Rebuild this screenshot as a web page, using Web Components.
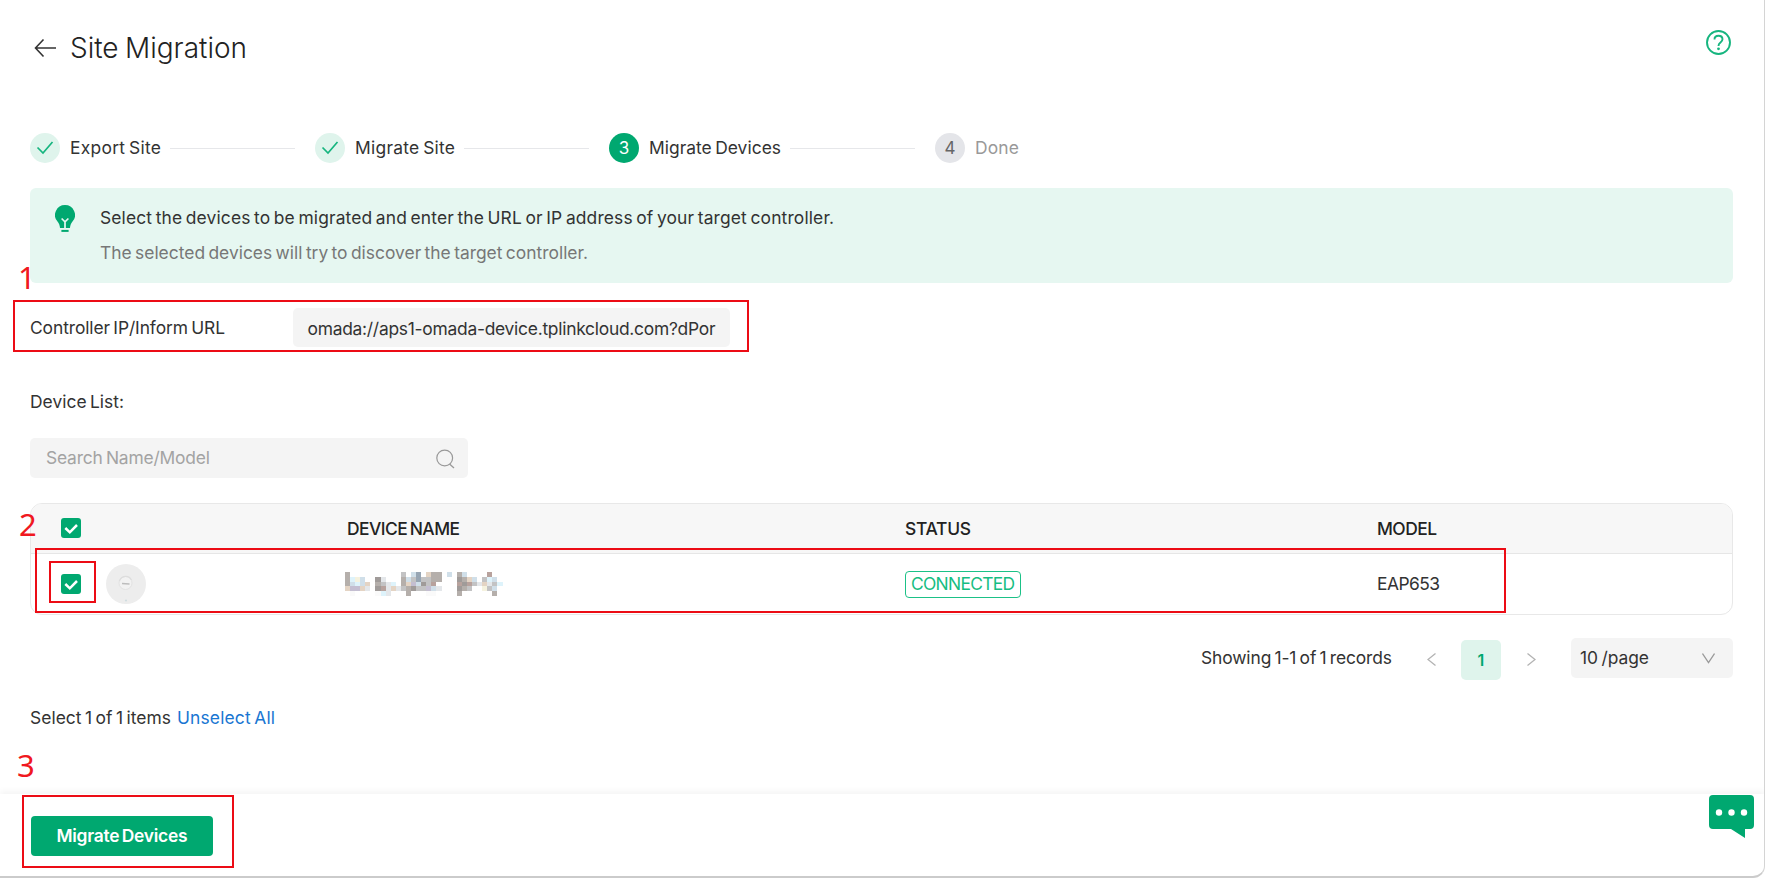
<!DOCTYPE html>
<html lang="en">
<head>
<meta charset="utf-8">
<title>Site Migration</title>
<style>
html,body{margin:0;padding:0;background:#fff}
body{width:1765px;height:878px;overflow:hidden;font-family:Inter,"Open Sans",sans-serif;font-size:17.4px;word-spacing:-1.5px;color:#333}
</style>
</head>
<body>
<site-migration></site-migration>
<script>
const define = (name, html, init) => customElements.define(name, class extends HTMLElement {
  constructor() {
    super();
    const t = document.createElement('template');
    t.innerHTML = html;
    this.attachShadow({ mode: 'open' }).appendChild(t.content.cloneNode(true));
  }
  connectedCallback() { if (init) init(this, this.shadowRoot); }
});

/* Single line of text, tracked so that it spans the width in its "w" attribute. */
define('fit-text', `<style>
:host{display:inline-block;white-space:pre;line-height:24px;flex:none}
</style><span><slot></slot></span>`, (el, root) => {
  const span = root.querySelector('span');
  const w = +el.getAttribute('w');
  const n = el.textContent.length;
  span.style.letterSpacing = '0px';
  const natural = span.getBoundingClientRect().width;
  if (n > 1) span.style.letterSpacing = ((w - natural) / (n - 1)).toFixed(4) + 'px';
  el.style.width = w + 'px';
});

define('step-item', `<style>
:host{display:flex;align-items:center;height:31px;color:#333}
.dot{width:30px;height:30px;border-radius:50%;background:#dff4ec;display:flex;align-items:center;justify-content:center;margin-right:10px;flex:none;font-size:17px}
svg{display:none}
:host([state=done]) svg{display:block}
:host([state=done]) .num{display:none}
:host([state=current]) .dot{background:#00a870;color:#fff}
:host([state=next]) .dot{background:#e4e5e9;color:#666}
:host([state=next]){color:#999}
.num{margin-top:1px}
.line{width:125px;height:1px;background:#e6e7ea;margin:1px 20px 0 9px}
:host([state=next]) .line{display:none}
</style>
<div class="dot"><span class="num"></span><svg width="18" height="16" viewBox="0 0 18 16"><path d="M1.5 7.5 7 13 16.5 2" fill="none" stroke="#16b57f" stroke-width="1.7"/></svg></div>
<slot></slot><div class="line"></div>`, (el, root) => {
  const n = el.getAttribute('n');
  if (n) root.querySelector('.num').textContent = n;
});

define('info-banner', `<style>
:host{display:flex;height:95px;background:#e6f7f1;border-radius:6px;margin-top:25px;box-sizing:border-box;padding:17px 25px}
.copy{display:flex;flex-direction:column;gap:11px;margin:1px 0 0 25px}
.sub{color:#777}
</style>
<svg width="20" height="27" viewBox="0 0 20 27"><path d="M10 0a10 10 0 0 1 7.5 16.6c-1.6 2-2.3 3.9-2.5 6.4H5c-.2-2.500-.9-4.400-2.500-6.400A10 10 0 0 1 10 0z" fill="#00a870"/><path d="M6.600 13.500 10 16.800 13.400 13.500M10 16.500V23.500" fill="none" stroke="#e6f7f1" stroke-width="1.700"/><path d="M6.400 24.900h7.200v2H6.400z" fill="#00a870"/></svg>
<div class="copy"><fit-text w="734">Select the devices to be migrated and enter the URL or IP address of your target controller.</fit-text>
<fit-text class="sub" w="488">The selected devices will try to discover the target controller.</fit-text></div>`);

define('url-field', `<style>
:host{display:flex;align-items:center;margin-top:25px;height:39px}
.label{width:262.500px}
.box{width:437.500px;height:39px;background:#f4f4f4;border-radius:5px;display:flex;align-items:center;padding:2px 0 0 15px;box-sizing:border-box}
</style><div class="label"><slot name="label"></slot></div><div class="box"><slot></slot></div>`);

define('search-box', `<style>
:host{display:flex;align-items:center;justify-content:space-between;width:438px;height:40px;box-sizing:border-box;background:#f4f4f4;border-radius:5px;margin-top:24px;padding:0 13px 0 16px;color:#a3a3a3}
svg{margin-top:2px}
</style><slot></slot><svg width="19" height="20" viewBox="0 0 19 20"><circle cx="8.700" cy="9" r="7.900" fill="none" stroke="#999" stroke-width="1.200"/><path d="M13.500 15 18 19" stroke="#999" stroke-width="1.300"/></svg>`);

define('check-box', `<style>
:host{display:block;width:20px;height:20px;flex:none}svg{display:block}
</style><svg width="20" height="20" viewBox="0 0 20 20"><rect width="20" height="20" rx="3" fill="#00a870"/><path d="M4.300 10 8.800 14.300 16 7" fill="none" stroke="#fff" stroke-width="2.500"/></svg>`);

/* Pixelated block covering the device name. */
define('masked-name', `<style>
:host{display:block;width:160px;height:24px;margin:0 0 0 -2px}svg{display:block}
</style><svg width="160" height="24" shape-rendering="crispEdges"></svg>`, (el, root) => {
  const colors = { g:'#b5afab', d:'#a09b99', l:'#e4e7ea', b:'#d0dfe9', c:'#def3fb', y:'#f5f2df', t:'#e4d4c4', p:'#c4bed1', s:'#c3c3c4', m:'#97a5b3', r:'#b8a29d', w:'#fafafa' };
  const rows = [
    'g          s bm tgg b gb    r  ',
    'gcyb  dl   gbsmssgg   dgtb scb ',
    'gbcbt gslc gtpbdsr    rdrsltlsc',
    'tpptl drltlsgdsspbl   dgs  ysb ',
    ' w    wcl   g   ww    g      g '
  ];
  let out = '';
  rows.forEach((row, y) => [...row].forEach((k, x) => {
    if (colors[k]) out += '<rect x="' + (x * 5.08) + '" y="' + y * 4.8 + '" width="5.1" height="4.8" fill="' + colors[k] + '"/>';
  }));
  root.querySelector('svg').innerHTML = out;
});

define('device-table', `<style>
:host{display:block;box-sizing:border-box;height:112px;border:1px solid #e8e8e8;border-radius:12px;margin-top:25px;overflow:hidden}
.row{display:grid;grid-template-columns:30px 45px 241px 558px 472px 1fr;align-items:center}
.head{height:49px;background:#f7f7f7;border-bottom:1px solid #e6e6e6;font-weight:500;color:#222}
.head fit-text{margin-top:1px}
.head check-box{margin-bottom:2px}
.body{height:60px}
.row check-box{grid-column:2}
.ap{display:block}
.tag{display:flex;align-items:center;justify-content:center;width:116px;height:27px;box-sizing:border-box;border:1.500px solid #1bc187;border-radius:4px;color:#16bd82}
</style>
<div class="row head"><check-box></check-box><span></span><fit-text w="113">DEVICE NAME</fit-text><fit-text w="66">STATUS</fit-text><fit-text w="60">MODEL</fit-text></div>
<div class="row body"><check-box></check-box>
<svg class="ap" width="40" height="40" viewBox="0 0 40 40"><circle cx="20" cy="20" r="20" fill="#ededed"/><circle cx="19.500" cy="19" r="6.500" fill="#f2f2f2" stroke="#e3e3e3"/><path d="M13.500 17a6.500 6.500 0 0 1 12-1" fill="none" stroke="#ddd" stroke-width="1.200"/><path d="M16 19.500l7.500.5" stroke="#bdbdbd" stroke-width="1.400"/><circle cx="20" cy="36.500" r="1.100" fill="#d0dde0"/></svg>
<masked-name></masked-name><div class="tag"><fit-text w="104">CONNECTED</fit-text></div><fit-text w="63">EAP653</fit-text></div>`);

define('page-nav', `<style>
:host{display:flex;justify-content:flex-end;align-items:flex-start;height:42px;margin-top:23px}
.total{margin:8px 35px 0 0}
.prev{margin:15px 25px 0 0}.next{margin:15px 35px 0 26px}
.cur{width:40px;height:40px;margin-top:2px;border-radius:5px;background:#dff4ec;color:#00a870;font-weight:600;font-size:16px;display:flex;align-items:center;justify-content:center}
.size{width:162px;height:40px;border-radius:5px;background:#f4f4f4;display:flex;align-items:center;justify-content:space-between;box-sizing:border-box;padding:0 18px 0 9px}
path{fill:none;stroke:#b3b3b3;stroke-width:1.300}
</style>
<fit-text class="total" w="191">Showing 1-1 of 1 records</fit-text>
<svg class="prev" width="9" height="13"><path d="M8.500.5 1 6.500l7.500 6"/></svg>
<div class="cur">1</div>
<svg class="next" width="9" height="13"><path d="M.5.500 8 6.500l-7.500 6"/></svg>
<div class="size"><fit-text w="69">10 /page</fit-text><svg width="13" height="11"><path d="M.5.500 6.500 9.500l6-9" style="stroke:#999"/></svg></div>`);

define('action-bar', `<style>
:host{display:flex;align-items:flex-start;justify-content:space-between;height:84px;box-sizing:border-box;margin-top:64px;padding:0 11px 0 31px;box-shadow:0 -3px 6px rgba(0,0,0,.045)}
button{all:unset;width:182px;height:40px;margin-top:21.500px;border-radius:4px;background:#00a870;color:#fff;font-weight:600;display:flex;align-items:center;justify-content:center}
svg{margin-top:1px}
</style><button><fit-text w="131">Migrate Devices</fit-text></button>
<svg width="45" height="43" viewBox="0 0 45 43"><path d="M4 0h37a4 4 0 0 1 4 4v26a4 4 0 0 1-4 4h-5v9L22 34H4a4 4 0 0 1-4-4V4a4 4 0 0 1 4-4z" fill="#00a870"/><g fill="#fff"><circle cx="10" cy="17.500" r="3.200"/><circle cx="22.500" cy="17.500" r="3.200"/><circle cx="35" cy="17.500" r="3.200"/></g></svg>`);

/* Red numbered callouts laid over the page. */
define('call-outs', `<style>
:host{position:absolute;inset:0;pointer-events:none;font-family:"Noto Sans",sans-serif;font-size:31px;line-height:32px;color:#f01820}
i{position:absolute;box-sizing:border-box;border:2px solid #ec0c15}
b{position:absolute;font-weight:400}
</style>
<i style="left:13px;top:300px;width:736px;height:52px"></i>
<i style="left:35px;top:548px;width:1471px;height:65px"></i>
<i style="left:49px;top:561px;width:47px;height:42px"></i>
<i style="left:22px;top:795px;width:212px;height:73px"></i>
<b style="left:18px;top:261px">1</b><b style="left:19px;top:508px">2</b><b style="left:17px;top:749px">3</b>`);

define('site-migration', `<style>
:host{display:block;position:relative;width:1765px;height:878px;box-sizing:border-box;overflow:hidden}
.frame{position:absolute;inset:-12px 0 0 -12px;border:1px solid #d4d4d4;border-bottom:2px solid #cbcbcb;border-radius:0 0 12px 0;pointer-events:none}
main{display:flex;flex-direction:column;padding:0 32px 0 30px}
header{display:flex;align-items:center;height:95px}
header .back{margin:0 14px 0 4px}
h1{margin:0;font-size:28px;font-weight:300;line-height:34px;color:#222}
.help{margin:-10px 2px 0 auto}
.steps{display:flex;margin-top:37px}
.list{margin-top:43px}
.sel{margin-top:26px;display:flex;gap:6px}
.sel .a{color:#1976d2}
</style>
<main>
<header><svg class="back" width="22" height="20" viewBox="0 0 22 20"><path d="M9.500 1.500 1.500 10l8 8.500M1.500 10H22" fill="none" stroke="#333" stroke-width="1.600"/></svg><h1><fit-text w="177">Site Migration</fit-text></h1>
<svg class="help" width="25" height="25" viewBox="0 0 25 25"><circle cx="12.500" cy="12.500" r="11.500" fill="none" stroke="#16b57f" stroke-width="1.900"/><path d="M8.500 9.500c0-2.400 1.700-3.700 4-3.700s4 1.400 4 3.500c0 1.800-1.100 2.600-2.300 3.500-1.200.9-1.700 1.500-1.700 3.200" fill="none" stroke="#16b57f" stroke-width="1.900"/><circle cx="12.500" cy="18.800" r="1.400" fill="#16b57f"/></svg></header>
<div class="steps">
<step-item state="done"><fit-text w="91">Export Site</fit-text></step-item>
<step-item state="done"><fit-text w="100">Migrate Site</fit-text></step-item>
<step-item state="current" n="3"><fit-text w="132">Migrate Devices</fit-text></step-item>
<step-item state="next" n="4"><fit-text w="44">Done</fit-text></step-item>
</div>
<info-banner></info-banner>
<url-field><fit-text slot="label" w="195">Controller IP/Inform URL</fit-text><fit-text w="408">omada://aps1-omada-device.tplinkcloud.com?dPor</fit-text></url-field>
<fit-text class="list" w="94">Device List:</fit-text>
<search-box><fit-text w="164">Search Name/Model</fit-text></search-box>
<device-table></device-table>
<page-nav></page-nav>
<div class="sel"><fit-text w="141">Select 1 of 1 items</fit-text><fit-text class="a" w="98">Unselect All</fit-text></div>
</main>
<action-bar></action-bar>
<div class="frame"></div>
<call-outs></call-outs>`);
</script>
</body>
</html>
